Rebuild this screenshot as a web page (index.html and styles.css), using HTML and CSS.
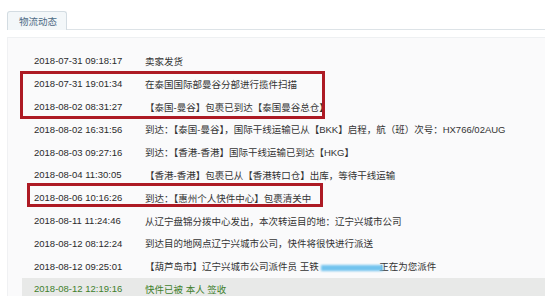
FILE: index.html
```html
<!DOCTYPE html>
<html>
<head>
    <title>物流动态</title>
    <link rel="stylesheet" href="styles.css">
</head>
<body>
    <div class="container">
        <div class="tabs">
            <div class="tab">物流动态</div>
        </div>

        <div class="panel">
            <div class="track-row"><span class="time">2018-07-31 09:18:17</span><span class="desc">卖家发货</span></div>
            <div class="track-row"><span class="time">2018-07-31 19:01:34</span><span class="desc">在泰国国际部曼谷分部进行揽件扫描</span></div>
            <div class="track-row"><span class="time">2018-08-02 08:31:27</span><span class="desc">【泰国-曼谷】包裹已到达【泰国曼谷总仓】</span></div>
            <div class="track-row"><span class="time">2018-08-02 16:31:56</span><span class="desc">到达：【泰国-曼谷】，国际干线运输已从【BKK】启程，航（班）次号：HX766/02AUG</span></div>
            <div class="track-row"><span class="time">2018-08-03 09:27:16</span><span class="desc">到达：【香港-香港】国际干线运输已到达【HKG】</span></div>
            <div class="track-row"><span class="time">2018-08-04 11:30:05</span><span class="desc">【香港-香港】包裹已从【香港转口仓】出库，等待干线运输</span></div>
            <div class="track-row"><span class="time">2018-08-06 10:16:26</span><span class="desc">到达：【惠州个人快件中心】包裹清关中</span></div>
            <div class="track-row"><span class="time">2018-08-11 11:24:46</span><span class="desc">从辽宁盘锦分拨中心发出，本次转运目的地：辽宁兴城市公司</span></div>
            <div class="track-row"><span class="time">2018-08-12 08:12:24</span><span class="desc">到达目的地网点辽宁兴城市公司，快件将很快进行派送</span></div>
            <div class="track-row"><span class="time">2018-08-12 09:25:01</span><span class="desc">【葫芦岛市】辽宁兴城市公司派件员 王铁 <span class="smear"></span>正在为您派件</span></div>
            <div class="track-row signed"><span class="time">2018-08-12 12:19:16</span><span class="desc">快件已被 本人 签收</span></div>

            <!-- hand drawn highlight boxes -->
            <div class="mark mark-scan"></div>
            <div class="mark mark-customs"></div>
        </div>
    </div>
</body>
</html>
```

FILE: styles.css
```css
body {
    font-family: "Liberation Sans", "Noto Sans CJK SC", sans-serif;
    margin: 0;
    background: white;
    color: #333;
    overflow: hidden;
}
.container {
    padding: 11px 0 0 7px;
}
.tabs {
    display: flex;
    border-bottom: 1px solid #dde3e7;
    height: 18px;
}
.tab {
    width: 47px;
    height: 18px;
    padding-left: 11px;
    border: 1px solid #d3dce2;
    border-bottom: none;
    border-radius: 3px 3px 0 0;
    background: #f3f7f9;
    color: #4d6b84;
    font-size: 9.5px;
    line-height: 19px;
}
.panel {
    position: relative;
    margin-top: 7px;
    padding-top: 11.6px;
    background: #fafafb;
    border-top: 1px solid #eef0f2;
    border-left: 1px solid #f0f1f3;
    font-size: 9.5px;
}
.track-row {
    display: flex;
    align-items: center;
    height: 22.8px;
    margin-left: 14px;
    padding-left: 12px;
    white-space: nowrap;
}
.time {
    width: 111px;
    flex: none;
    color: #2b2b2b;
}
.desc {
    color: #333;
}
.track-row.signed {
    background: #e8e9e8;
}
.track-row.signed .time,
.track-row.signed .desc {
    color: #3f7f2c;
}
.smear {
    display: inline-block;
    width: 62px;
    height: 6px;
    margin-right: -4px;
    background: #72c3ee;
    filter: blur(1.2px);
    vertical-align: middle;
}
.mark {
    position: absolute;
    border: 3px solid #ad1a24;
}
.mark-scan {
    left: 12px;
    top: 33px;
    width: 299px;
    height: 42px;
}
.mark-customs {
    left: 19px;
    top: 145px;
    width: 290px;
    height: 18px;
}
```
